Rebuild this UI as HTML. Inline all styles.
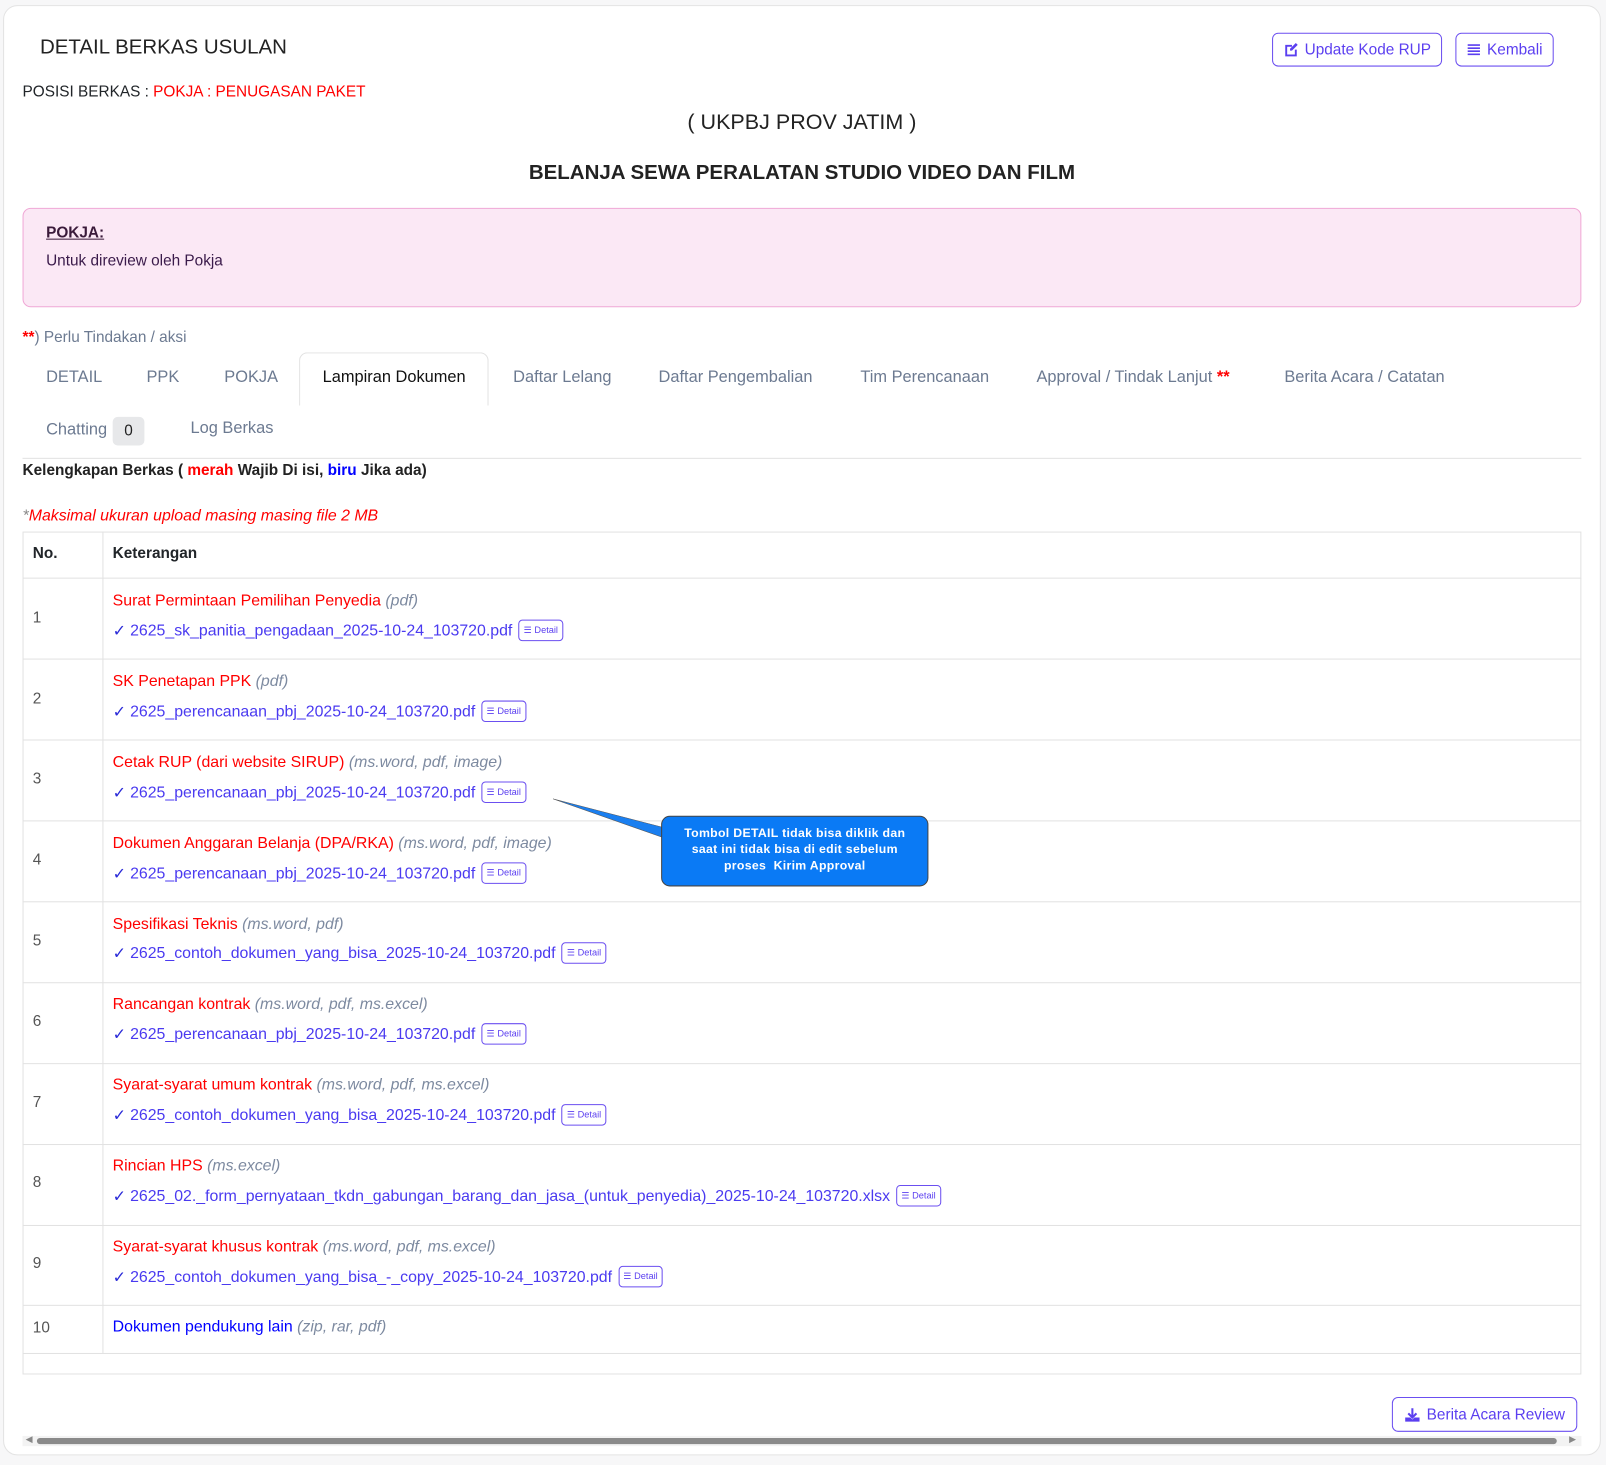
<!DOCTYPE html>
<html><head><meta charset="utf-8"><style>
*{box-sizing:border-box;margin:0;padding:0}
body{width:1606px;height:1465px;background:#f7f7f8;font-family:"Liberation Sans",sans-serif;color:#212529;position:relative;overflow:hidden}
#w{position:absolute;left:0;top:0;width:1568px;height:1430px;transform:scale(1.0242);transform-origin:0 0}
.card{position:absolute;left:3px;top:5px;width:1560px;height:1416px;background:#fff;border:1px solid #e3e3e3;border-radius:14px}
.a{position:absolute;white-space:nowrap}
.btn{position:absolute;border:1px solid #6b4ff0;border-radius:6px;color:#5b3ff0;font-size:15px;display:flex;align-items:center;justify-content:center;gap:6px;background:#fff}
.tab{position:absolute;font-size:16px;color:#6c7a91;top:360px}
.red{color:#f00}
.blue{color:#00f}
.lnk{color:#4a3af0}
.gray{color:#7d8aa0;font-style:italic}
.hl{position:absolute;left:22px;width:1522px;height:1px;background:#e2e2e2}
.det{display:inline-flex;align-items:center;gap:2px;border:1px solid #6b4ff0;border-radius:4px;font-size:9px;color:#5b3ff0;height:21px;padding:0 4px;vertical-align:middle;margin-left:6px;position:relative;top:-1px}
.chk{color:#2b2bd8;margin-right:4px}
.num{position:absolute;left:32px;font-size:15px;color:#555}
.t1{position:absolute;left:110px;font-size:15.5px}
.t2{position:absolute;left:110px;font-size:15.5px}
</style></head><body><div id="w">
<div class="card"></div>
<div class="a" style="left:39px;top:35px;font-size:20px;color:#222">DETAIL BERKAS USULAN</div>
<div class="btn" style="left:1242px;top:32px;width:166px;height:33px"><svg width="15" height="15" viewBox="0 0 16 16"><path d="M2 3h7v2H4v8h8V8h2v7H2z" fill="#5b3ff0"/><path d="M13 1l2 2-6 6H7V7z" fill="#5b3ff0"/></svg>Update Kode RUP</div>
<div class="btn" style="left:1421px;top:32px;width:96px;height:33px"><svg width="14" height="14" viewBox="0 0 14 14"><path d="M1 2h12M1 5h12M1 8h12M1 11h12" stroke="#5b3ff0" stroke-width="1.6"/></svg>Kembali</div>
<div class="a" style="left:22px;top:81px;font-size:15px">POSISI BERKAS : <span class="red">POKJA : PENUGASAN PAKET</span></div>
<div class="a" style="left:0;width:1566px;text-align:center;top:108px;font-size:21px;color:#222">( UKPBJ PROV JATIM )</div>
<div class="a" style="left:0;width:1566px;text-align:center;top:158px;font-size:20px;font-weight:bold;color:#222">BELANJA SEWA PERALATAN STUDIO VIDEO DAN FILM</div>
<div class="a" style="left:22px;top:203px;width:1522px;height:97px;background:#fbe8f5;border:1px solid #f0a8d6;border-radius:8px"></div>
<div class="a" style="left:45px;top:219px;font-size:15px;font-weight:bold;text-decoration:underline;color:#3a1a3a">POKJA:</div>
<div class="a" style="left:45px;top:246px;font-size:15px;color:#3a1a4a">Untuk direview oleh Pokja</div>
<div class="a" style="left:22px;top:321px;font-size:15px;color:#6c7a91"><b class="red">**</b>) Perlu Tindakan / aksi</div>
<div class="a" style="left:292px;top:344px;width:185px;height:52px;border:1px solid #e2e2e2;border-bottom:none;border-radius:8px 8px 0 0;background:#fff"></div>
<div class="tab" style="left:45px">DETAIL</div>
<div class="tab" style="left:143px">PPK</div>
<div class="tab" style="left:219px">POKJA</div>
<div class="tab" style="left:315px;color:#111">Lampiran Dokumen</div>
<div class="tab" style="left:501px">Daftar Lelang</div>
<div class="tab" style="left:643px">Daftar Pengembalian</div>
<div class="tab" style="left:840px">Tim Perencanaan</div>
<div class="tab" style="left:1012px">Approval / Tindak Lanjut <b class="red">**</b></div>
<div class="tab" style="left:1254px">Berita Acara / Catatan</div>
<div class="tab" style="left:45px;top:411px">Chatting</div>
<div class="a" style="left:110px;top:407px;width:31px;height:28px;background:#e7e8ea;border-radius:5px;font-size:15px;text-align:center;line-height:28px;color:#222">0</div>
<div class="tab" style="left:186px;top:410px">Log Berkas</div>
<div class="hl" style="top:447px"></div>
<div class="a" style="left:22px;top:451px;font-size:15px;font-weight:bold;color:#222">Kelengkapan Berkas ( <span class="red">merah</span> Wajib Di isi, <span class="blue">biru</span> Jika ada)</div>
<div class="a" style="left:22px;top:495px;font-size:15.5px;font-style:italic;color:#f00"><span style="color:#888">*</span>Maksimal ukuran upload masing masing file 2 MB</div>
<div class="a" style="left:22px;top:519px;width:1522px;height:823px;border:1px solid #e2e2e2"></div>
<div class="a" style="left:100px;top:519px;width:1px;height:803px;background:#e2e2e2"></div>
<div class="a" style="left:32px;top:532px;font-size:15px;font-weight:bold">No.</div>
<div class="a" style="left:110px;top:532px;font-size:15px;font-weight:bold">Keterangan</div>
<div class="hl" style="top:564px"></div><div class="hl" style="top:643px"></div><div class="hl" style="top:722px"></div><div class="hl" style="top:801px"></div><div class="hl" style="top:880px"></div><div class="hl" style="top:959px"></div><div class="hl" style="top:1038px"></div><div class="hl" style="top:1117px"></div><div class="hl" style="top:1196px"></div><div class="hl" style="top:1274px"></div><div class="hl" style="top:1321px"></div>

<div class="num" style="top:595px">1</div>
<div class="t1 a" style="top:578px"><span class="red">Surat Permintaan Pemilihan Penyedia</span> <span class="gray">(pdf)</span></div>
<div class="t2 a" style="top:606px"><span class="chk">✓</span><span class="lnk">2625_sk_panitia_pengadaan_2025-10-24_103720.pdf</span><span class="det">☰ Detail</span></div>

<div class="num" style="top:674px">2</div>
<div class="t1 a" style="top:657px"><span class="red">SK Penetapan PPK</span> <span class="gray">(pdf)</span></div>
<div class="t2 a" style="top:685px"><span class="chk">✓</span><span class="lnk">2625_perencanaan_pbj_2025-10-24_103720.pdf</span><span class="det">☰ Detail</span></div>

<div class="num" style="top:752px">3</div>
<div class="t1 a" style="top:736px"><span class="red">Cetak RUP (dari website SIRUP)</span> <span class="gray">(ms.word, pdf, image)</span></div>
<div class="t2 a" style="top:764px"><span class="chk">✓</span><span class="lnk">2625_perencanaan_pbj_2025-10-24_103720.pdf</span><span class="det">☰ Detail</span></div>

<div class="num" style="top:831px">4</div>
<div class="t1 a" style="top:815px"><span class="red">Dokumen Anggaran Belanja (DPA/RKA)</span> <span class="gray">(ms.word, pdf, image)</span></div>
<div class="t2 a" style="top:843px"><span class="chk">✓</span><span class="lnk">2625_perencanaan_pbj_2025-10-24_103720.pdf</span><span class="det">☰ Detail</span></div>

<div class="num" style="top:910px">5</div>
<div class="t1 a" style="top:894px"><span class="red">Spesifikasi Teknis</span> <span class="gray">(ms.word, pdf)</span></div>
<div class="t2 a" style="top:921px"><span class="chk">✓</span><span class="lnk">2625_contoh_dokumen_yang_bisa_2025-10-24_103720.pdf</span><span class="det">☰ Detail</span></div>

<div class="num" style="top:989px">6</div>
<div class="t1 a" style="top:972px"><span class="red">Rancangan kontrak</span> <span class="gray">(ms.word, pdf, ms.excel)</span></div>
<div class="t2 a" style="top:1000px"><span class="chk">✓</span><span class="lnk">2625_perencanaan_pbj_2025-10-24_103720.pdf</span><span class="det">☰ Detail</span></div>

<div class="num" style="top:1068px">7</div>
<div class="t1 a" style="top:1051px"><span class="red">Syarat-syarat umum kontrak</span> <span class="gray">(ms.word, pdf, ms.excel)</span></div>
<div class="t2 a" style="top:1079px"><span class="chk">✓</span><span class="lnk">2625_contoh_dokumen_yang_bisa_2025-10-24_103720.pdf</span><span class="det">☰ Detail</span></div>

<div class="num" style="top:1146px">8</div>
<div class="t1 a" style="top:1130px"><span class="red">Rincian HPS</span> <span class="gray">(ms.excel)</span></div>
<div class="t2 a" style="top:1158px"><span class="chk">✓</span><span class="lnk">2625_02._form_pernyataan_tkdn_gabungan_barang_dan_jasa_(untuk_penyedia)_2025-10-24_103720.xlsx</span><span class="det">☰ Detail</span></div>

<div class="num" style="top:1225px">9</div>
<div class="t1 a" style="top:1209px"><span class="red">Syarat-syarat khusus kontrak</span> <span class="gray">(ms.word, pdf, ms.excel)</span></div>
<div class="t2 a" style="top:1237px"><span class="chk">✓</span><span class="lnk">2625_contoh_dokumen_yang_bisa_-_copy_2025-10-24_103720.pdf</span><span class="det">☰ Detail</span></div>

<div class="num" style="top:1288px">10</div>
<div class="t1 a" style="top:1287px"><span class="blue">Dokumen pendukung lain</span> <span class="gray">(zip, rar, pdf)</span></div>

<svg class="a" style="left:530px;top:770px" width="390" height="110"><polygon points="10,10 118,38 118,48" fill="#1a7ff0" stroke="#555" stroke-width="0.5"/><rect x="116" y="27" width="260" height="68" rx="8" fill="#0a7af5" stroke="#444" stroke-width="1"/></svg>
<div class="a" style="left:646px;top:805px;width:260px;text-align:center;color:#fff;font-weight:bold;font-size:12px;line-height:16px;letter-spacing:0.3px">Tombol DETAIL tidak bisa diklik dan<br>saat ini tidak bisa di edit sebelum<br>proses&nbsp; Kirim Approval</div>

<div class="btn" style="left:1359px;top:1364px;width:181px;height:34px"><svg width="16" height="15" viewBox="0 0 16 15"><path d="M8 1v8M4 6l4 4 4-4" stroke="#5b3ff0" stroke-width="2" fill="none"/><path d="M1 10h5l2 2 2-2h5v4H1z" fill="#5b3ff0"/></svg>Berita Acara Review</div>
<div class="a" style="left:22px;top:1402px;width:1522px;height:10px;background:#f3f3f3"></div>
<div class="a" style="left:36px;top:1404px;width:1484px;height:6px;background:#8a8a8a;border-radius:3px"></div>
<div class="a" style="left:25px;top:1400px;font-size:9px;color:#888">◀</div>
<div class="a" style="left:1532px;top:1400px;font-size:9px;color:#888">▶</div>
</div></body></html>
